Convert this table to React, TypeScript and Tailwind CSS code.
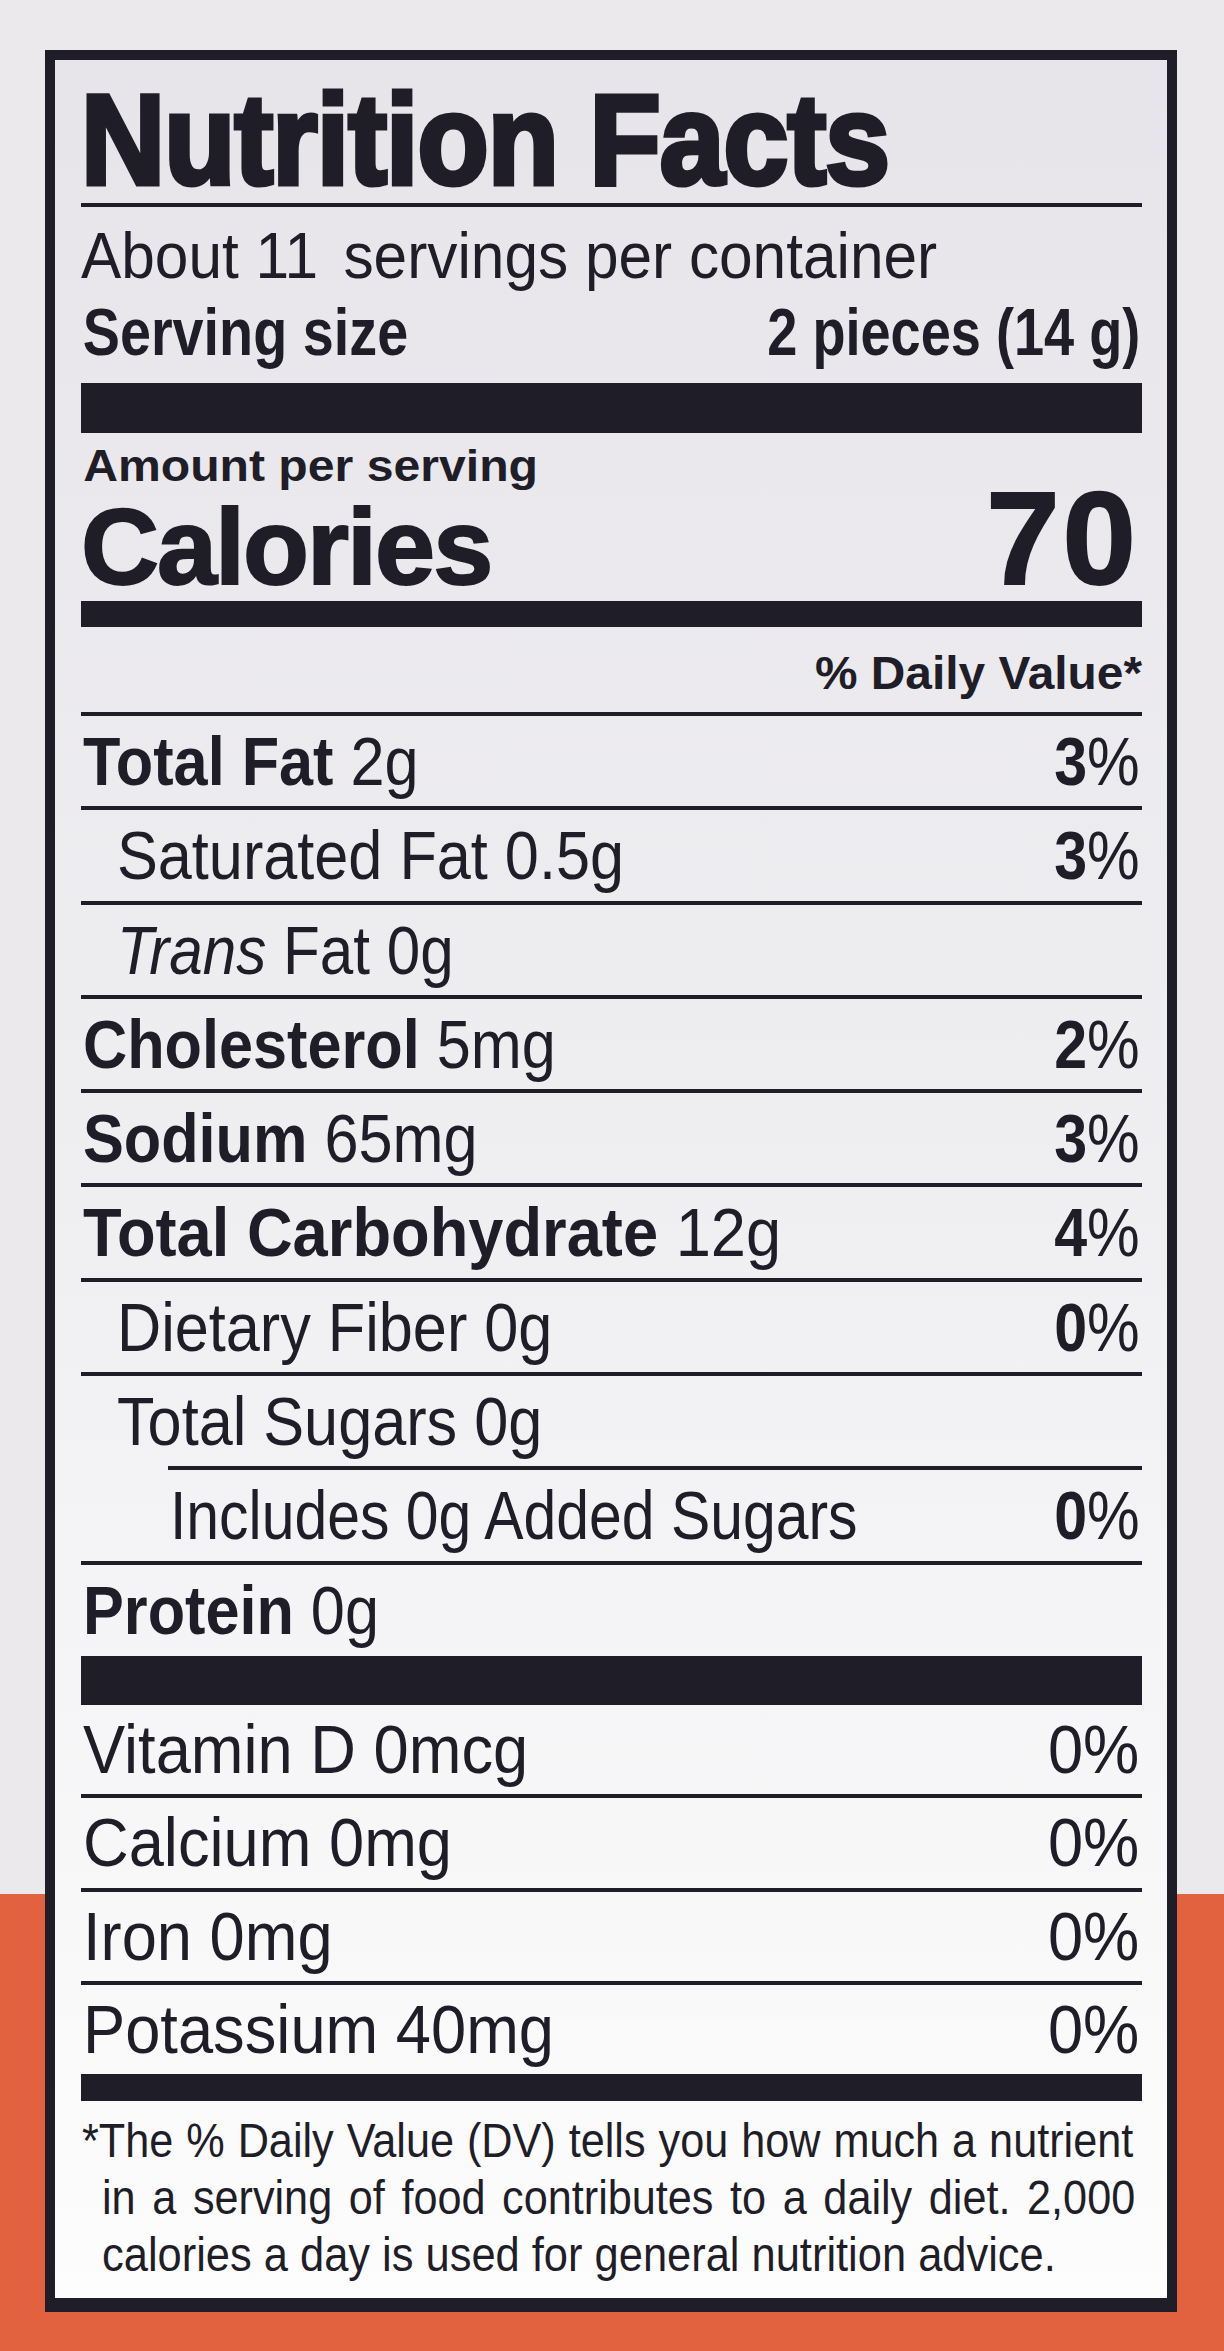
import type { ReactNode } from "react";

const SANS = "font-['Liberation_Sans','Arial',sans-serif]";

type Nutrient = {
  label: ReactNode;
  amount: string;
  dv?: string;
  bold?: boolean;
  level?: 0 | 1 | 2;
  squeeze?: string;
};

const NUTRIENTS: Nutrient[] = [
  { label: "Total Fat", amount: "2g", dv: "3", bold: true },
  { label: "Saturated Fat", amount: "0.5g", dv: "3", level: 1 },
  {
    label: (
      <>
        <i>Trans</i> Fat
      </>
    ),
    amount: "0g",
    level: 1,
    squeeze: "scale-x-[0.885]",
  },
  { label: "Cholesterol", amount: "5mg", dv: "2", bold: true },
  { label: "Sodium", amount: "65mg", dv: "3", bold: true },
  {
    label: "Total Carbohydrate",
    amount: "12g",
    dv: "4",
    bold: true,
    squeeze: "scale-x-[0.93]",
  },
  { label: "Dietary Fiber", amount: "0g", dv: "0", level: 1 },
  { label: "Total Sugars", amount: "0g", level: 1 },
  {
    label: "Includes 0g Added Sugars",
    amount: "",
    dv: "0",
    level: 2,
    squeeze: "scale-x-[0.866]",
  },
  { label: "Protein", amount: "0g", bold: true },
];

const VITAMINS = [
  { label: "Vitamin D", amount: "0mcg" },
  { label: "Calcium", amount: "0mg" },
  { label: "Iron", amount: "0mg" },
  { label: "Potassium", amount: "40mg" },
];

const INDENT = ["pl-[2px]", "pl-[36px]", "pl-[89px]"];

function Rule({ className = "" }: { className?: string }) {
  return <div className={`h-[4px] bg-[#1f1e28] ${className}`} />;
}

function NutrientRow({ n }: { n: Nutrient }) {
  const level = n.level ?? 0;
  return (
    <>
      <Rule className={level === 2 ? "ml-[87px]" : ""} />
      <div
        className={`flex h-[90.3px] items-baseline justify-between text-[68px] leading-[90px] ${INDENT[level]}`}
      >
        <span
          className={`inline-block origin-left whitespace-nowrap ${n.squeeze ?? "scale-x-[0.9]"}`}
        >
          {n.bold ? <span className="font-bold">{n.label}</span> : n.label}
          {n.amount && <> {n.amount}</>}
        </span>
        {n.dv && (
          <span className="inline-block origin-right scale-x-[0.87] pr-[3px]">
            <span className="font-bold">{n.dv}</span>%
          </span>
        )}
      </div>
    </>
  );
}

export default function App() {
  return (
    <div className="h-[2351px] w-[1224px] overflow-hidden bg-[linear-gradient(to_bottom,#ebe9ec_0px,#ebe9ec_1894px,#e2613f_1894px)] pt-[50px]">
      <div
        className={`${SANS} ml-[45px] h-[2262px] w-[1132px] border-[10px] border-b-[14px] border-[#1f1e28] bg-linear-to-b from-[#e7e5e9] via-[#efeef1] to-[#fdfdfd] pl-[26px] pr-[25px] text-[#1f1e28]`}
      >
        <h1 className="origin-left scale-x-[0.91] whitespace-nowrap pt-[17px] text-[128px] font-bold leading-[126px] tracking-[-1px] [-webkit-text-stroke:5px_#1f1e28]">
          Nutrition Facts
        </h1>
        <Rule />
        <p className="mt-[13px] origin-left scale-x-[0.943] whitespace-nowrap text-[64px] leading-[72px]">
          About 11 <span className="pl-[9px]">servings per container</span>
        </p>
        <div className="mt-[4px] flex justify-between whitespace-nowrap text-[66px] font-bold leading-[72px]">
          <span className="inline-block origin-left scale-x-[0.845] pl-[2px]">
            Serving size
          </span>
          <span className="inline-block origin-right scale-x-[0.82] pr-[2px]">
            2 pieces (14 g)
          </span>
        </div>
        <div className="mt-[15px] h-[50px] bg-[#1f1e28]" />

        <p className="mt-[10px] origin-left scale-x-[1.07] whitespace-nowrap pl-[2px] text-[45px] font-bold leading-[46px]">
          Amount per serving
        </p>
        <div className="flex items-baseline justify-between font-bold [-webkit-text-stroke:2px_#1f1e28]">
          <span className="text-[108px] leading-[100px] tracking-[-2px]">
            Calories
          </span>
          <span className="pr-[3px] text-[132px] leading-[100px] tracking-[3px]">
            70
          </span>
        </div>
        <div className="mt-[4px] h-[26px] bg-[#1f1e28]" />

        <p className="mt-[21px] origin-right scale-x-[1.04] whitespace-nowrap text-right text-[46px] font-bold leading-[50px]">
          % Daily Value*
        </p>
        <div className="mt-[14px]">
          {NUTRIENTS.map((n, i) => (
            <NutrientRow key={i} n={n} />
          ))}
        </div>
        <div className="mt-[1px] h-[49px] bg-[#1f1e28]" />

        <div>
          {VITAMINS.map((v, i) => (
            <div key={v.label}>
              {i > 0 && <Rule />}
              <div className="flex h-[89.3px] items-baseline justify-between pl-[2px] pr-[3px] text-[68px] leading-[89px]">
                <span className="inline-block origin-left scale-x-[0.93] whitespace-nowrap">
                  {v.label} {v.amount}
                </span>
                <span className="inline-block origin-right scale-x-[0.93]">
                  0%
                </span>
              </div>
            </div>
          ))}
        </div>
        <div className="h-[27px] bg-[#1f1e28]" />

        <div className="pt-[11px] text-[48px] leading-[57px]">
          <p className="ml-[1px] w-[1168px] origin-left scale-x-[0.9] [text-align-last:justify]">
            *The % Daily Value (DV) tells you how much a nutrient
          </p>
          <p className="ml-[21px] w-[1148px] origin-left scale-x-[0.9] [text-align-last:justify]">
            in a serving of food contributes to a daily diet. 2,000
          </p>
          <p className="ml-[21px] origin-left scale-x-[0.905] whitespace-nowrap">
            calories a day is used for general nutrition advice.
          </p>
        </div>
      </div>
    </div>
  );
}
